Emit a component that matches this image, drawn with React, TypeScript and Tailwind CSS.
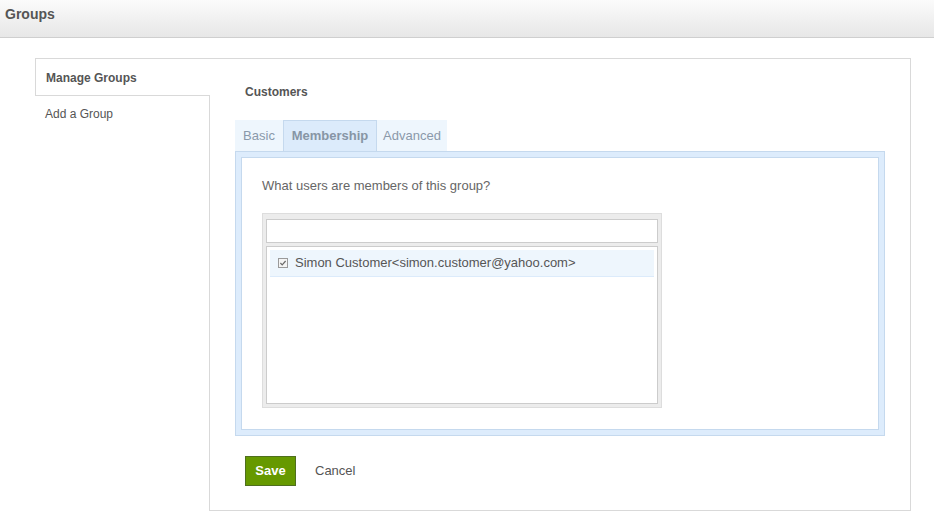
export default function App() {
  const font = { fontFamily: '"Liberation Sans", Arial, sans-serif' };

  return (
    <div className="min-h-[525px] w-[934px] bg-white text-[#555]" style={font}>
      {/* Page header */}
      <div className="h-[38px] border-b border-[#cfcfcf] bg-gradient-to-b from-[#fbfbfb] to-[#e7e7e7] pl-[5px] pt-[5px]">
        <h1 className="text-[14px] font-bold leading-[18px] text-[#555]">Groups</h1>
      </div>

      <div className="flex pl-[35px] pr-[23px] pt-[20px]">
        {/* Sidebar */}
        <div className="flex w-[175px] flex-col">
          <div className="flex h-[38px] items-center border-t border-l border-b border-[#d9d9d9] pl-[10px] pt-[2px] text-[12px] font-bold text-[#555]">
            Manage Groups
          </div>
          <div className="flex-1 border-r border-[#d9d9d9] pl-[10px] pt-[9px]">
            <div className="text-[12px] leading-[18px] text-[#555]">Add a Group</div>
          </div>
        </div>

        {/* Content */}
        <div className="flex-1 border-t border-r border-b border-[#d9d9d9] px-[25px] pt-[24px] pb-[24px]">
          <h2 className="pl-[10px] text-[12px] font-bold leading-[18px] text-[#555]">Customers</h2>

          <div className="mt-[19px] flex h-[31px] text-[13px] text-[#8a99aa]">
            <div className="flex w-[48px] items-center justify-center bg-[#eef6fd]">Basic</div>
            <div className="flex w-[94px] items-center justify-center border border-b-0 border-[#c5d9ee] bg-[#dcebfb] font-bold text-[#8795a5]">
              Membership
            </div>
            <div className="flex w-[70px] items-center justify-center bg-[#eef6fd]">Advanced</div>
          </div>

          <div className="border border-[#c5d9ee] bg-[#ddecfc] p-[5px]">
            <div className="border border-[#c5d9ee] bg-white pl-[20px] pt-[19px] pb-[21px]">
              <p className="text-[13px] leading-[18px] text-[#666]">What users are members of this group?</p>

              <div className="mt-[18px] w-[400px] border border-[#dddddd] bg-[#ececec] px-[3px] pt-[5px] pb-[3px]">
                <input
                  type="text"
                  className="block h-[24px] w-full border border-[#cccccc] bg-white px-[4px] text-[13px] outline-none"
                />
                <div className="mt-[3px] h-[158px] border border-[#cccccc] bg-white py-[3px] pl-[3px] pr-[3px]">
                  <div className="flex h-[27px] items-center border-b border-[#dcebfb] bg-[#eef6fd] pl-[8px] text-[13px] text-[#555]">
                    <svg width="10" height="10" viewBox="0 0 10 10" className="shrink-0">
                      <rect x="0.5" y="0.5" width="9" height="9" fill="#f4f4f4" stroke="#9a9a9a" />
                      <path d="M2.4 5 L4.2 6.8 L7.6 3" fill="none" stroke="#6a6a6a" strokeWidth="1.2" />
                    </svg>
                    <span className="ml-[7px]">Simon Customer&lt;simon.customer@yahoo.com&gt;</span>
                  </div>
                </div>
              </div>
            </div>
          </div>

          <div className="mt-[20px] flex items-center pl-[10px]">
            <button className="h-[30px] w-[51px] border border-[#4f6f1e] bg-[#669900] text-[13px] font-bold text-white">
              Save
            </button>
            <span className="ml-[19px] text-[13px] text-[#555]">Cancel</span>
          </div>
        </div>
      </div>
    </div>
  );
}
